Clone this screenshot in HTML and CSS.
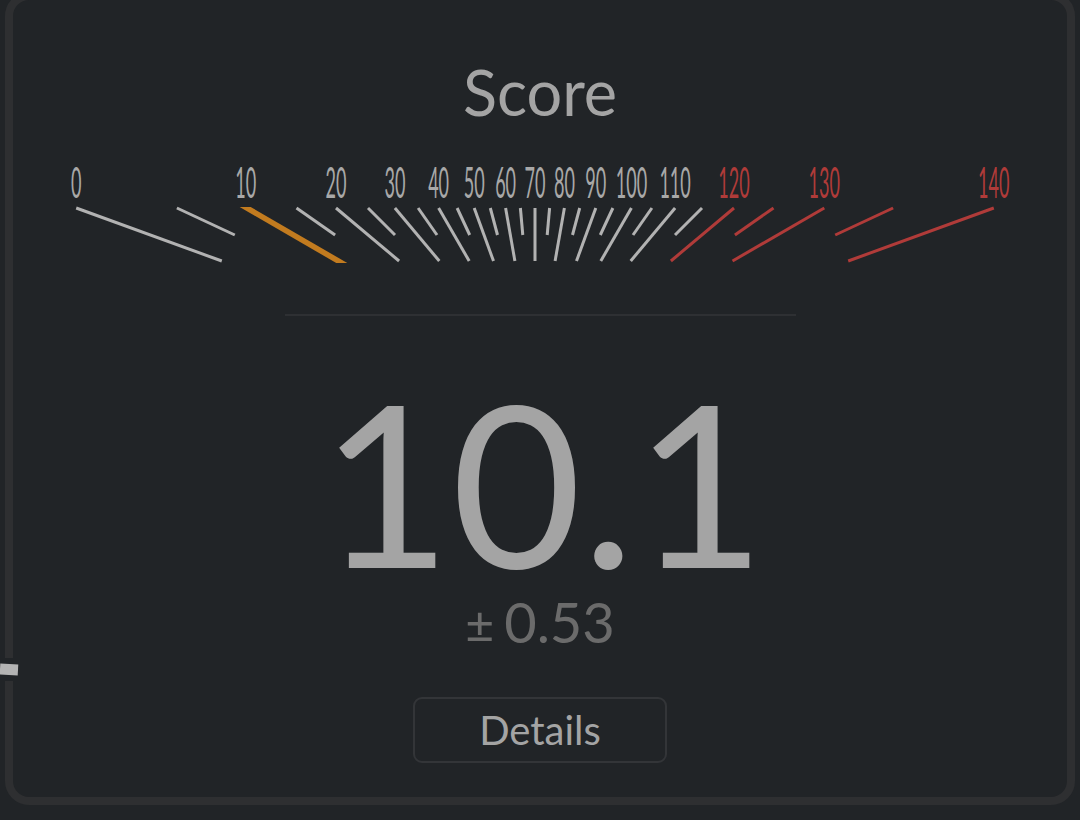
FILE: index.html
```html
<!DOCTYPE html>
<html lang="en">
<head>
    <meta charset="UTF-8">
    <title>Score</title>
    <link rel="stylesheet" href="styles.css">
</head>
<body>

    <div class="card">
        <h1 class="title">Score</h1>
        <svg class="dial" id="dial" viewBox="0 0 1054 120"></svg>
        <hr class="divider">
        <div class="value">10.1</div>
        <div class="error"><span class="pm">±</span><span>0.53</span></div>
        <button class="details">Details</button>
    </div>

    <!-- needle from the neighbouring meter -->
    <div class="stray"><div class="stray-bar"></div></div>

    <script>
        const NS = "http://www.w3.org/2000/svg";
        const dial = document.getElementById("dial");
        const score = 10.1;

        // ticks point at a focus below the dial, angle in degrees = value - 70
        const cx = 522, focusY = 225, topY = 58;

        function add(tag, attrs, text) {
            const el = document.createElementNS(NS, tag);
            for (const [k, v] of Object.entries(attrs)) el.setAttribute(k, v);
            if (text !== undefined) el.textContent = text;
            dial.appendChild(el);
            return el;
        }

        function xAt(value, y) {
            const a = (value - 70) * Math.PI / 180;
            return cx + (focusY - y) * Math.tan(a);
        }

        for (let v = 0; v <= 140; v += 5) {
            const major = v % 10 === 0;
            const endY = major ? 111 : 85;
            const cls = v >= 120 ? "tick hot" : "tick";
            if (v !== 10) {
                add("line", {
                    x1: xAt(v, topY).toFixed(1), y1: topY,
                    x2: xAt(v, endY).toFixed(1), y2: endY,
                    class: cls
                });
            }
            if (major) {
                const x = xAt(v, topY).toFixed(1);
                add("text", {
                    transform: `translate(${x} 48) scale(0.42 1)`,
                    class: v >= 120 ? "label hot" : "label"
                }, v);
            }
        }

        // current score marker
        const y1 = 57, y2 = 113, w = 5.5;
        const a = xAt(score, y1), b = xAt(score, y2);
        add("polygon", {
            points: `${a - w},${y1} ${a + w},${y1} ${b + w},${y2} ${b - w},${y2}`,
            class: "marker"
        });
    </script>
</body>
</html>
```

FILE: styles.css
```css
html, body {
    margin: 0;
    padding: 0;
    background-color: #212427;
    font-family: Lato, "Noto Sans", sans-serif;
    color: #a4a4a4;
    overflow: hidden;
}
.card {
    box-sizing: border-box;
    width: 1070px;
    height: 813px;
    margin: -8px 0 0 5px;
    padding-top: 56px;
    border: 8px solid #2e2f31;
    border-radius: 24px;
    text-align: center;
}
.title {
    margin: 0;
    font-size: 63px;
    font-weight: normal;
    line-height: 72px;
}
.dial {
    display: block;
    width: 1054px;
    height: 120px;
    margin-top: 22px;
}
.tick {
    stroke: #b2b2b2;
    stroke-width: 3;
}
.tick.hot {
    stroke: #b03b39;
}
.label {
    fill: #a8a8a8;
    font-family: Lato, sans-serif;
    font-size: 43px;
    text-anchor: middle;
}
.label.hot {
    fill: #b03b39;
}
.marker {
    fill: #c27b1f;
}
.divider {
    width: 511px;
    height: 2px;
    margin: 44px auto 0;
    border: 0;
    background-color: #2e3033;
}
.value {
    margin-top: 53px;
    padding-left: 6px;
    font-size: 225px;
    line-height: 225px;
}
.error {
    display: flex;
    justify-content: center;
    align-items: baseline;
    gap: 10px;
    font-size: 56px;
    line-height: 56px;
    color: #6b6b6b;
}
.pm {
    font-size: 50px;
}
.details {
    box-sizing: border-box;
    width: 254px;
    height: 66px;
    margin-top: 45px;
    padding: 0;
    border: 2px solid #333538;
    border-radius: 9px;
    background: transparent;
    color: #a4a4a4;
    font-family: Lato, sans-serif;
    font-size: 40px;
    line-height: 62px;
}
.stray {
    position: absolute;
    left: 0;
    top: 658px;
    width: 14px;
    height: 23px;
    background-color: #212427;
}
.stray-bar {
    width: 18px;
    height: 11px;
    margin-top: 6px;
    background-color: #b3b3b3;
    transform: rotate(3deg);
}
```
